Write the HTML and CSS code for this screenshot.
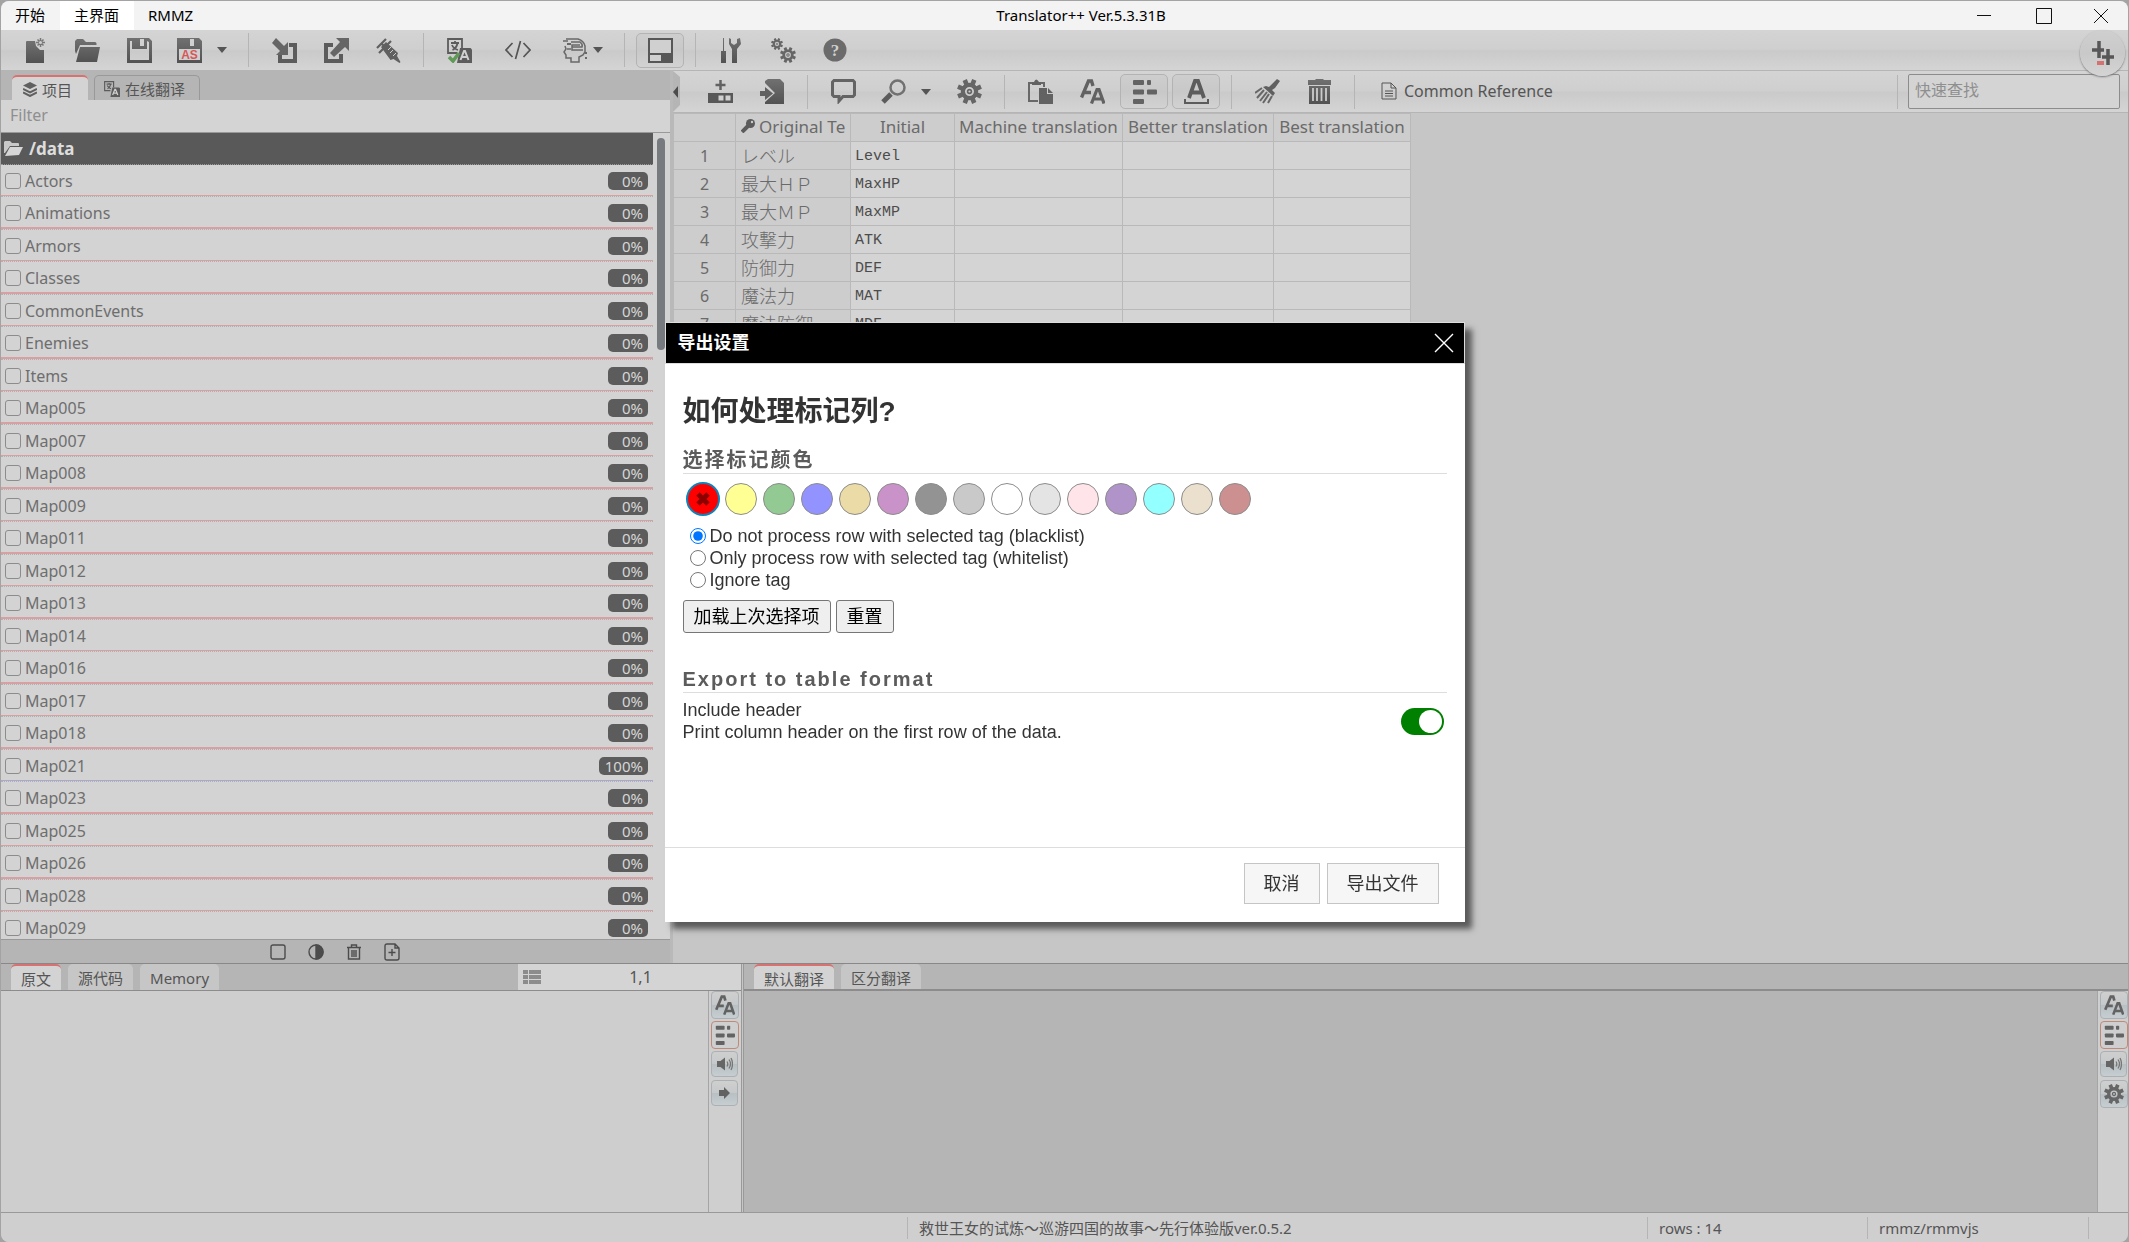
FILE: index.html
```html
<!DOCTYPE html>
<html lang="zh-CN">
<head>
<meta charset="utf-8">
<title>Translator++ Ver.5.3.31B</title>
<link rel="stylesheet" href="styles.css">
</head>
<body>
<svg class="sprite" aria-hidden="true">
  <defs>
    <linearGradient id="ink" x1="0" y1="0" x2="0" y2="1"><stop offset="0" stop-color="#717171"/><stop offset="1" stop-color="#525252"/></linearGradient>
  </defs>
  <symbol id="i-gear" viewBox="0 0 25 25">
    <g fill="none" stroke="#666"><circle cx="12.5" cy="12.5" r="6.6" stroke-width="4.2"/><circle cx="12.5" cy="12.5" r="1.9" stroke-width="1.6"/>
    <path stroke-width="4.6" d="M12.5 0v5M12.5 20v5M0 12.5h5M20 12.5h5M3.7 3.7l3.5 3.5M17.8 17.8l3.5 3.5M3.7 21.3l3.5-3.5M17.8 7.2l3.5-3.5" transform="rotate(22.5 12.5 12.5)"/></g>
  </symbol>
  <symbol id="i-aa" viewBox="0 0 25 25">
    <g fill="none" stroke="#626262"><path stroke-width="3.4" d="M1.5 18.5 8.5 2h3l1.500 5M5 13.500h6"/><path stroke-width="3.200" d="M11.500 24.500 17 10.500h2l5 14M13.500 20h9"/></g>
  </symbol>
  <symbol id="i-segments" viewBox="0 0 25 25">
    <g fill="#636363"><rect x="1" y="1" width="11" height="5" rx="1"/><rect x="15" y="1" width="4" height="5" rx="1"/><rect x="1" y="10.500" width="11" height="5" rx="1"/><rect x="15" y="10.500" width="10" height="5" rx="1"/><rect x="1" y="20" width="11" height="5" rx="1"/></g>
  </symbol>
  <symbol id="i-sound" viewBox="0 0 16 16">
    <path fill="#666" d="M0 5h3.500L8 1.500v13L3.500 11H0z"/><path fill="none" stroke="#777" stroke-width="1.300" d="M10 5.500q1.600 2.500 0 5M12 3.500q3 4.500 0 9M14 2q3 6 0 12"/>
  </symbol>
  <symbol id="i-translate" viewBox="0 0 25 25">
    <path fill="none" stroke="#5c5c5c" stroke-width="1.800" d="M10 15H1V1h14v9M4 5h8M8 3v2M5.500 12c3-1.500 4.500-4 5-7M5 7c1 2.500 3 4 6 5"/>
    <path fill="#5c5c5c" d="M13 10h10.500L25 11.500V25H10z"/><path fill="none" stroke="#d0d0d0" stroke-width="2" d="M13.500 22l3.500-9h1l3.500 9M15 19h5"/>
  </symbol>
  <symbol id="i-folder" viewBox="0 0 25 23">
    <path fill="url(#ink)" d="M0 2l2-2h6l3 3h9q1.500 0 1.500 1.500V6H5L1 15 0 12zM5 8h20l-3 15H1z"/>
  </symbol>
</svg>

<div class="window">
  <header class="titlebar">
    <nav class="titlebar-menu" aria-label="菜单">
      <button>开始</button><button class="is-active">主界面</button><button>RMMZ</button>
    </nav>
    <div class="titlebar-title">Translator++ Ver.5.3.31B</div>
    <div class="titlebar-controls">
      <button aria-label="最小化"><svg width="16" height="16"><path d="M1 7.500h14"/></svg></button>
      <button aria-label="最大化"><svg width="16" height="16"><path d="M.5 .5h15v15H.5z"/></svg></button>
      <button aria-label="关闭"><svg width="16" height="16"><path d="M1 1l14 14M15 1L1 15"/></svg></button>
    </div>
  </header>

  <div class="toolbar toolbar-main">
    <button class="tool" aria-label="新建"><svg width="25" height="25"><path fill="url(#ink)" d="M3 4q0-1 1-1h8l1 5 4 4h4v13H3z"/><path stroke="#777" stroke-width="1.500" fill="none" d="M17.500 0v9M13 4.500h9M14.500 1.500l6 6M20.500 1.500l-6 6"/><circle cx="17.500" cy="4.500" r="1.500" fill="#d0d0d0"/></svg></button>
    <button class="tool" aria-label="打开"><svg width="25" height="23"><use href="#i-folder"/></svg></button>
    <button class="tool" aria-label="保存"><svg width="25" height="25"><path fill="url(#ink)" fill-rule="evenodd" d="M0 0h22l3 3v22H0zM3 3v19h19V4l-2-1v8H5V3zM13 1v7h4V1z"/></svg></button>
    <button class="tool tool-split saveas" aria-label="另存为"><svg width="25" height="25"><path fill="url(#ink)" fill-rule="evenodd" d="M0 0h22l3 3v22H0zM3 12v10h19V12zM13 1v7h4V1z"/><path fill="#cfcfcf" d="M2 11h21v11H2z"/><text x="12.500" y="21" text-anchor="middle" class="as">AS</text></svg><i class="caret"></i></button>
    <span class="sep"></span>
    <button class="tool" aria-label="导入"><svg width="25" height="25"><path fill="none" stroke="#5c5c5c" stroke-width="4" d="M17 7h6v16H8v-6"/><path fill="#666" d="M4 0l8 8 4-4v13H4l4-4-8-8z"/></svg></button>
    <button class="tool" aria-label="导出"><svg width="25" height="25"><path fill="none" stroke="#5c5c5c" stroke-width="4" d="M9 7H2v16h15v-7"/><path fill="#666" d="M12 0h13v13l-4-4-11 10-4-4L16 4z"/></svg></button>
    <button class="tool" aria-label="注入"><svg width="25" height="25"><path fill="#606060" d="M5 9l5-5 12 11-1 3 3.500 6-1 1-6-4-3 1z"/><path fill="none" stroke="#606060" stroke-width="2.200" d="M1 10L10 1M3 15L15 3M5 5l4 4"/><path stroke="#ccc" d="M12 12l3-3M14 15l3-3M17 18l3-3"/></svg></button>
    <span class="sep"></span>
    <button class="tool" aria-label="翻译"><svg width="25" height="25"><use href="#i-translate"/><path fill="none" stroke="#619a58" stroke-width="3.500" d="M2 19l4 4 6-8"/></svg></button>
    <button class="tool tool-wide" aria-label="代码"><svg width="26" height="20"><path fill="none" stroke="#555" stroke-width="1.700" d="M7.500 3L1 10l6.500 7M18.500 3L25 10l-6.500 7M15.500 1l-5 18"/></svg></button>
    <button class="tool tool-split head" aria-label="自动化"><svg width="25" height="25"><path fill="none" stroke="#686868" stroke-width="1.500" d="M0 3h5M3 1h12q6 2 7 7v6l-2 3-4 2v5H8v-4H3v-3l-2-3 2-3-1-3M8 4h9q3 2 2 5H9V7h8M9 9v3h11M4 11h4"/><path fill="#686868" d="M22 14h2v2h-2zM22 19h2v2h-2zM4 5h4v2H4z"/></svg><i class="caret"></i></button>
    <span class="sep"></span>
    <button class="tool is-on" aria-label="面板"><svg width="25" height="25"><path fill="#575757" d="M0 0h25v25H0z"/><path fill="#d0d0d0" d="M2 2h21v13H2zM2 17h11v6H2z"/></svg></button>
    <span class="sep"></span>
    <button class="tool" aria-label="工具"><svg width="20" height="25"><path fill="url(#ink)" d="M2 0h1v13h2v12H0V13h2zM8 0l2 1v4l3 2 3-2V1l3-1 1 6-4 5v14h-5V11L8 6z"/></svg></button>
    <button class="tool" aria-label="设置"><svg width="25" height="25"><use href="#i-gear" width="12" height="12"/><use href="#i-gear" x="9" y="9" width="16" height="16"/></svg></button>
    <button class="tool" aria-label="帮助"><svg width="24" height="24"><circle cx="12" cy="12" r="11.500" fill="#6b6b6b"/><text x="12" y="18" text-anchor="middle" class="q">?</text></svg></button>
    <button class="brand" aria-label="Translator++"><svg width="22" height="24"><path stroke="#575757" stroke-width="3.500" fill="none" d="M7 0v17M0 9h12M16 8v16M10 16h12"/><path fill="#d47272" d="M5 20h7v4H5z"/></svg></button>
  </div>

  <div class="workspace">
    <aside class="project">
      <div class="project-tabs">
        <button class="ptab is-active"><svg width="14" height="15"><path fill="#606060" d="M7 0l7 3.500L7 7 0 3.500z"/><path fill="none" stroke="#606060" stroke-width="2" d="M0 7l7 3.500L14 7M0 10.500L7 14l7-3.500"/></svg>项目</button>
        <button class="ptab"><svg width="16" height="16"><use href="#i-translate"/></svg>在线翻译</button>
      </div>
      <input class="filter" type="text" placeholder="Filter" aria-label="Filter">
      <div class="files">
        <div class="files-scroll">
          <div class="folder"><svg width="19" height="15"><path fill="#c9c9c9" d="M0 1l1-1h5l2 2h6q1 0 1 1v2H6L1 12H0z"/><path fill="#d6d6d6" d="M6 6h13l-4 8-14 1z"/></svg>/data</div>
          <ul class="file-list">
            <li><label><input type="checkbox">Actors</label><span class="badge">0%</span></li>
            <li><label><input type="checkbox">Animations</label><span class="badge">0%</span></li>
            <li><label><input type="checkbox">Armors</label><span class="badge">0%</span></li>
            <li><label><input type="checkbox">Classes</label><span class="badge">0%</span></li>
            <li><label><input type="checkbox">CommonEvents</label><span class="badge">0%</span></li>
            <li><label><input type="checkbox">Enemies</label><span class="badge">0%</span></li>
            <li><label><input type="checkbox">Items</label><span class="badge">0%</span></li>
            <li><label><input type="checkbox">Map005</label><span class="badge">0%</span></li>
            <li><label><input type="checkbox">Map007</label><span class="badge">0%</span></li>
            <li><label><input type="checkbox">Map008</label><span class="badge">0%</span></li>
            <li><label><input type="checkbox">Map009</label><span class="badge">0%</span></li>
            <li><label><input type="checkbox">Map011</label><span class="badge">0%</span></li>
            <li><label><input type="checkbox">Map012</label><span class="badge">0%</span></li>
            <li><label><input type="checkbox">Map013</label><span class="badge">0%</span></li>
            <li><label><input type="checkbox">Map014</label><span class="badge">0%</span></li>
            <li><label><input type="checkbox">Map016</label><span class="badge">0%</span></li>
            <li><label><input type="checkbox">Map017</label><span class="badge">0%</span></li>
            <li><label><input type="checkbox">Map018</label><span class="badge">0%</span></li>
            <li class="is-done"><label><input type="checkbox">Map021</label><span class="badge">100%</span></li>
            <li><label><input type="checkbox">Map023</label><span class="badge">0%</span></li>
            <li><label><input type="checkbox">Map025</label><span class="badge">0%</span></li>
            <li><label><input type="checkbox">Map026</label><span class="badge">0%</span></li>
            <li><label><input type="checkbox">Map028</label><span class="badge">0%</span></li>
            <li><label><input type="checkbox">Map029</label><span class="badge">0%</span></li>
          </ul>
        </div>
        <div class="scroll-track"><div class="scroll-thumb"></div></div>
      </div>
      <div class="project-actions">
        <button aria-label="全选"><svg width="16" height="16"><rect x="1" y="1" width="14" height="14" rx="2"/></svg></button>
        <button aria-label="反选"><svg width="16" height="16"><circle cx="8" cy="8" r="7"/><path class="solid" d="M8 1a7 7 0 010 14z"/></svg></button>
        <button aria-label="删除"><svg width="16" height="16"><path d="M1 3.500h14M5.500 3V1h5v2M2.500 4v11h11V4M6 6v7M8 6v7M10 6v7"/></svg></button>
        <button aria-label="添加"><svg width="16" height="18"><path d="M1 3q0-2 2-2h8l4 4v10q0 2-2 2H3q-2 0-2-2zM11 1v4h4M8 6v7M4.500 9.500h7"/></svg></button>
      </div>
    </aside>

    <main class="sheet">
      <div class="toolbar toolbar-sheet">
        <button class="collapse" aria-label="收起"><i></i></button>
        <button class="tool" aria-label="添加列"><svg width="25" height="25"><path stroke="#626262" stroke-width="2.500" fill="none" d="M12.500 1v10M7.500 6h10"/><path fill="#585858" d="M0 14h25v10H0z"/><path fill="#d0d0d0" d="M10.500 16.500h5v5h-5zM17.500 16.500h5v5h-5z"/></svg></button>
        <button class="tool" aria-label="导入文件"><svg width="25" height="25"><path fill="url(#ink)" d="M5 2l3-2h12l4 4v21H5v-2l10-9L5 4z"/><path fill="#606060" d="M0 12h5V8l8 6.500L5 21v-4H0z"/></svg></button>
        <span class="sep"></span>
        <button class="tool" aria-label="备注"><svg width="25" height="25"><path fill="none" stroke="#646464" stroke-width="3" d="M3 1.500h19l1.500 1.500v13L22 17.500H12L8 22v-4.500H3L1.500 16V3z"/></svg></button>
        <button class="tool tool-split search" aria-label="查找"><svg width="25" height="25"><circle cx="16.500" cy="8.500" r="7" fill="none" stroke="#717171" stroke-width="2.500"/><path stroke="#5c5c5c" stroke-width="5" d="M2 23l8-8"/></svg><i class="caret"></i></button>
        <button class="tool" aria-label="选项"><svg width="25" height="25"><use href="#i-gear"/></svg></button>
        <span class="sep"></span>
        <button class="tool" aria-label="粘贴"><svg width="25" height="25"><path fill="none" stroke="#686868" stroke-width="2" d="M10 22H1V4h15v4"/><path fill="#626262" d="M4 6V3h2q2-5 5 0h2v3zM11 9h9l5 5v11H11z"/><path fill="#ccc" d="M19 9v6h6v-1h-5V9z"/></svg></button>
        <button class="tool" aria-label="字体"><svg width="25" height="25"><use href="#i-aa"/></svg></button>
        <button class="tool is-on" aria-label="换行"><svg width="25" height="25"><use href="#i-segments"/></svg></button>
        <button class="tool is-on" aria-label="文本"><svg width="25" height="25"><path fill="none" stroke="#5c5c5c" stroke-width="3.800" d="M5 19l6-17h3l6 17M8 13.500h9"/><path fill="none" stroke="#5c5c5c" stroke-width="2" d="M1 20v4h23v-4"/></svg></button>
        <span class="sep"></span>
        <button class="tool" aria-label="清除"><svg width="25" height="25"><path fill="#606060" d="M22 0l3 2-5 7-3 2 3 3-2 3-10-9 3-1 3 1 2-2z"/><path stroke="#676767" stroke-width="2" fill="none" d="M7 9l-7 5M9 11l-7 8M12 13l-7 9M14 15l-6 9M17 17l-4 7"/></svg></button>
        <button class="tool" aria-label="删除行"><svg width="25" height="25"><path fill="url(#ink)" d="M1 1h7l1-1h7l1 1h7v5H1zM2 7h21v18H2z"/><path stroke="#ccc" stroke-width="1.800" d="M6 9v13M10 9v13M14.500 9v13M19 9v13"/></svg></button>
        <span class="sep"></span>
        <button class="reference"><svg width="16" height="18"><path d="M1 1h9l5 5v11H1zM10 1v5h5M4 9h8M4 11.500h8M4 14h8"/></svg>Common Reference</button>
        <span class="sep push"></span>
        <input class="quick" type="text" placeholder="快速查找" aria-label="快速查找">
      </div>
      <div class="sheet-body">
        <table class="grid">
          <colgroup><col class="c-num"><col class="c-orig"><col class="c-init"><col class="c-mach"><col class="c-better"><col class="c-best"></colgroup>
          <thead><tr><th></th><th class="key"><svg width="14" height="14"><path fill="none" stroke="#5c5c5c" stroke-width="4" d="M1 13l6-6"/><circle cx="9.500" cy="4.500" r="4.500" fill="#5c5c5c"/><circle cx="11" cy="3" r="1.200" fill="#ccc"/></svg>Original Te</th><th>Initial</th><th>Machine translation</th><th>Better translation</th><th>Best translation</th></tr></thead>
          <tbody>
            <tr><th>1</th><td>レベル</td><td>Level</td><td></td><td></td><td></td></tr>
            <tr><th>2</th><td>最大ＨＰ</td><td>MaxHP</td><td></td><td></td><td></td></tr>
            <tr><th>3</th><td>最大ＭＰ</td><td>MaxMP</td><td></td><td></td><td></td></tr>
            <tr><th>4</th><td>攻撃力</td><td>ATK</td><td></td><td></td><td></td></tr>
            <tr><th>5</th><td>防御力</td><td>DEF</td><td></td><td></td><td></td></tr>
            <tr><th>6</th><td>魔法力</td><td>MAT</td><td></td><td></td><td></td></tr>
            <tr><th>7</th><td>魔法防御</td><td>MDF</td><td></td><td></td><td></td></tr>
          </tbody>
        </table>
      </div>
    </main>
  </div>

  <div class="editors">
    <section class="editor editor-source">
      <div class="editor-tabs">
        <button class="etab is-active">原文</button><button class="etab">源代码</button><button class="etab">Memory</button>
        <div class="position"><svg width="18" height="15"><path fill="#8c8c8c" d="M0 0h5v4H0zM6 0h12v4H6zM0 5h5v4H0zM6 5h12v4H6zM0 10h5v4H0zM6 10h12v4H6z"/></svg><span>1,1</span></div>
      </div>
      <div class="editor-body">
        <textarea aria-label="原文" readonly></textarea>
        <div class="side">
          <button aria-label="字体"><svg width="20" height="20"><use href="#i-aa"/></svg></button>
          <button class="is-on" aria-label="换行"><svg width="20" height="20"><use href="#i-segments"/></svg></button>
          <button class="low" aria-label="朗读"><svg width="16" height="16"><use href="#i-sound"/></svg></button>
          <button class="low" aria-label="下一个"><svg width="12" height="12"><path fill="#626262" d="M0 3h5V0l6 6-6 6V9H0z"/></svg></button>
        </div>
      </div>
    </section>
    <section class="editor editor-target">
      <div class="editor-tabs">
        <button class="etab is-active">默认翻译</button><button class="etab">区分翻译</button>
      </div>
      <div class="editor-body">
        <textarea aria-label="默认翻译"></textarea>
        <div class="side">
          <button aria-label="字体"><svg width="20" height="20"><use href="#i-aa"/></svg></button>
          <button class="is-on" aria-label="换行"><svg width="20" height="20"><use href="#i-segments"/></svg></button>
          <button class="low" aria-label="朗读"><svg width="16" height="16"><use href="#i-sound"/></svg></button>
          <button aria-label="设置"><svg width="20" height="20"><use href="#i-gear"/></svg></button>
        </div>
      </div>
    </section>
  </div>

  <footer class="status"><span></span><span>救世王女的试炼～巡游四国的故事～先行体验版ver.0.5.2</span><span>rows : 14</span><span>rmmz/rmmvjs</span><span></span></footer>
</div>

<div class="overlay">
  <section class="dialog" role="dialog" aria-labelledby="dialog-title">
    <header class="dialog-head"><span id="dialog-title">导出设置</span><button aria-label="关闭"><svg width="20" height="20"><path d="M1 1l18 18M19 1L1 19"/></svg></button></header>
    <form class="dialog-body">
      <h1>如何处理标记列?</h1>
      <h2>选择标记颜色</h2>
      <div class="swatches">
        <button type="button" class="swatch is-picked red" aria-label="红"><svg width="14" height="14"><path stroke="#8c0000" stroke-width="5" d="M2 2l10 10M12 2L2 12"/></svg></button>
        <button type="button" class="swatch yellow" aria-label="黄"></button>
        <button type="button" class="swatch green" aria-label="绿"></button>
        <button type="button" class="swatch blue" aria-label="蓝"></button>
        <button type="button" class="swatch gold" aria-label="金"></button>
        <button type="button" class="swatch violet" aria-label="紫"></button>
        <button type="button" class="swatch gray" aria-label="灰"></button>
        <button type="button" class="swatch silver" aria-label="银"></button>
        <button type="button" class="swatch white" aria-label="白"></button>
        <button type="button" class="swatch smoke" aria-label="浅灰"></button>
        <button type="button" class="swatch pink" aria-label="粉"></button>
        <button type="button" class="swatch purple" aria-label="深紫"></button>
        <button type="button" class="swatch aqua" aria-label="青"></button>
        <button type="button" class="swatch beige" aria-label="米"></button>
        <button type="button" class="swatch brown" aria-label="棕"></button>
      </div>
      <div class="choices">
        <label><input type="radio" name="mode" checked>Do not process row with selected tag (blacklist)</label>
        <label><input type="radio" name="mode">Only process row with selected tag (whitelist)</label>
        <label><input type="radio" name="mode">Ignore tag</label>
      </div>
      <div class="plain-buttons"><button type="button">加载上次选择项</button><button type="button">重置</button></div>
      <h2>Export to table format</h2>
      <div class="option">
        <label for="include-header">Include header<br>Print column header on the first row of the data.</label>
        <input class="toggle" id="include-header" type="checkbox" checked>
      </div>
    </form>
    <footer class="dialog-foot"><button>取消</button><button>导出文件</button></footer>
  </section>
</div>
</body>
</html>
```
FILE: styles.css
```css
* { box-sizing: border-box; }
:root {
  --ui: "Noto Sans", "Noto Sans CJK SC", sans-serif;
  --arial: "Liberation Sans", "Noto Sans CJK SC", sans-serif;
  --line: #b5b5b5;
  --bar: linear-gradient(#d4d4d4, #cfcfcf 48%, #cacaca 52%, #d4d4d4);
}
body { margin: 0; padding: 1px 1px 0; background: #a3a3a3; font: 16px/20px var(--ui); color: #555; }
button, input, textarea { font: inherit; color: inherit; margin: 0; border-radius: 0; }
button { border: 0; padding: 0; background: none; white-space: nowrap; }
svg { display: block; flex: none; }
.sprite { position: absolute; width: 0; height: 0; }

.window { display: grid; grid-template-rows: 29px 40px minmax(0, 894fr) minmax(0, 248fr) 30px; height: calc(100vh - 1px); overflow: hidden; border-radius: 8px; background: #c6c6c6; }

/* title bar */
.titlebar { display: flex; background: #f3f3f3; color: #000; font-size: 15px; }
.titlebar-menu { display: flex; }
.titlebar-menu button { padding: 0 15px 1px 14px; }
.titlebar-menu .is-active { background: #fff; }
.titlebar-title { flex: 1; text-align: center; line-height: 29px; }
.titlebar-controls { display: flex; }
.titlebar-controls button { display: grid; place-items: center; width: 60px; }
.titlebar-controls svg { fill: none; stroke: #111; }
.titlebar-controls button:last-child { width: 54px; }

/* toolbars */
.toolbar { display: flex; align-items: center; gap: 4px; background: var(--bar); }
.toolbar-main { padding: 0 3px 0 10px; }
.tool { display: flex; align-items: center; justify-content: center; width: 48px; height: 35px; border-radius: 5px; }
.tool.is-on { border: 1px solid #b3b3b3; background: linear-gradient(#cecece, #c8c8c8 50%, #d2d2d2); }
.tool-wide { width: 62px; }
.tool-split { width: auto; padding: 0 10px; }
.saveas { gap: 15px; }
.head { gap: 5px; }
.search { gap: 15px; }
.caret { border: 5px solid transparent; border-top: 6px solid #555; border-bottom: 0; }
.as { font: bold 12px "Liberation Sans", sans-serif; fill: #d65757; }
.q { font: bold 17px "Liberation Serif", serif; fill: #d0d0d0; }
.sep { width: 1px; height: 34px; margin: 0 7px; background: var(--line); }
.push { margin-left: auto; margin-right: 6px; }
.brand { z-index: 2; display: grid; place-items: center; align-self: flex-start; flex: none; width: 45px; height: 46px; margin: 0 0 -6px auto; border-radius: 50%; background: linear-gradient(#cfcfcf, #c9c9c9 50%, #d4d4d4); box-shadow: 0 1px 2px #777; }

.workspace { display: grid; grid-template-columns: minmax(0, 672fr) minmax(0, 1455fr); min-height: 0; border-bottom: 1px solid #888; }

/* project panel */
.project { display: flex; flex-direction: column; min-height: 0; border-right: 3px solid #b9b9b9; background: #d3d3d3; }
.project-tabs { display: flex; align-items: flex-end; gap: 6px; height: 30px; padding-left: 11px; background: #b5b5b5; }
.ptab { display: flex; align-items: center; gap: 5px; height: 25px; padding: 2px 14px 0 9px; border: 1px solid #999; border-bottom: 0; border-radius: 5px 5px 0 0; font-size: 15px; }
.ptab.is-active { border: 0; border-top: 2px solid #d87272; padding: 2px 16px 0 11px; background: #d4d4d4; }
.filter { height: 33px; padding: 0 9px 2px; border: 0; border-bottom: 1px solid #999; background: #d4d4d4; }
.filter::placeholder, .quick::placeholder { color: #8f8f8f; opacity: 1; }
.files { display: flex; flex: 1; min-height: 0; overflow: hidden; }
.files-scroll { flex: 1; }
.folder { display: flex; align-items: center; gap: 6px; height: 32px; padding-left: 3px; border-bottom: 1px dotted #999; background: #595959; color: #ddd; font-weight: bold; font-size: 17px; }
.file-list { margin: 0; padding: 0; list-style: none; }
.file-list li { display: flex; align-items: center; justify-content: space-between; height: 32px; padding-right: 5px; border-bottom: 1px dotted #b0b0b0; box-shadow: inset 0 -1px #d9a0a3; color: #6e6e6e; }
.file-list li:nth-child(even) { height: 33px; box-shadow: inset 0 -2px #d9a0a3; }
.file-list li.is-done { box-shadow: inset 0 -1px #a9a9cf; }
.file-list label { display: flex; align-items: center; gap: 4px; padding-left: 4px; }
.file-list input { appearance: none; width: 16px; height: 16px; border: 1px solid #8c8c8c; border-radius: 3px; }
.badge { min-width: 40px; padding: 0 5px 0 6px; border-radius: 5px; background: #5c5c5c; color: #d6d6d6; font-size: 15px; line-height: 18px; text-align: right; }
.scroll-track { width: 17px; padding: 5px 5px 0 4px; }
.scroll-thumb { height: 212px; border-radius: 4px; background: #777b80; }
.project-actions { display: flex; align-items: center; justify-content: center; gap: 22px; height: 24px; padding-right: 2px; border-top: 1px solid #999; background: #b5b5b5; }
.project-actions svg { fill: none; stroke: #4c4c4c; stroke-width: 1.4; }
.project-actions .solid { fill: #4c4c4c; }

/* sheet */
.sheet { display: flex; flex-direction: column; min-height: 0; overflow: hidden; }
.toolbar-sheet { height: 43px; padding-right: 8px; border-top: 1px solid var(--line); border-bottom: 1px solid var(--line); }
.collapse { display: flex; align-items: center; align-self: stretch; width: 7px; margin-right: 12px; background: #b5b5b5; clip-path: polygon(0 0, 100% 6px, 100% 34px, 0 100%); }
.collapse i { border: 6px solid transparent; border-right: 5px solid #4c4c4c; border-left: 0; }
.reference { display: flex; align-items: center; gap: 7px; margin-left: 15px; padding-bottom: 2px; }
.reference svg { fill: none; stroke: #555; }
.quick { width: 212px; height: 35px; padding: 0 6px 3px; border: 1px solid #8c8c8c; border-radius: 2px; background: #d4d4d4; }
.sheet-body { flex: 1; min-height: 0; overflow: hidden; }
.grid { width: 737px; table-layout: fixed; border-collapse: collapse; }
.c-num { width: 62px; } .c-orig { width: 115px; } .c-init { width: 104px; } .c-mach { width: 168px; } .c-better { width: 151px; } .c-best { width: 137px; }
.grid tr { height: 28px; }
.grid th, .grid td { height: 28px; padding: 0 4px; border: 1px solid #b9b9b9; overflow: hidden; white-space: nowrap; font-weight: normal; line-height: 20px; }
.grid th { background: #cdcdcd; color: #6a6a6a; text-align: center; }
.grid thead th { padding: 0 3px 2px; font-size: 17px; }
.grid thead .key { padding-left: 5px; padding-right: 0; text-align: left; }
.key svg { display: inline-block; margin-right: 4px; }
.grid td { padding-top: 2px; background: #d4d4d4; color: #4c4c4c; font: 15px/20px "Liberation Mono", monospace; }
.grid td:nth-child(2) { padding: 0 4px 2px 5px; background: #cdcdcd; color: #6a6a6a; font: 18px/20px "Noto Sans CJK JP", sans-serif; font-weight: 300; }

/* editors */
.editors { display: grid; grid-template-columns: minmax(0, 743fr) minmax(0, 1384fr); min-height: 0; }
.editor { display: flex; flex-direction: column; min-width: 0; }
.editor-source { border-right: 3px double #999; }
.editor-tabs { display: flex; gap: 7px; height: 27px; padding-left: 10px; border-bottom: 1px solid #8c8c8c; background: #b5b5b5; }
.etab { padding: 2px 10px 0; border-radius: 5px 5px 0 0; background: #c6c6c6; font-size: 15px; }
.etab.is-active { border-top: 2px solid #d87272; background: #d3d3d3; }
.position { display: flex; align-items: center; width: 223px; margin-left: auto; padding-left: 5px; background: #d4d4d4; }
.position span { flex: 1; padding-right: 1px; text-align: center; }
.editor-body { display: flex; flex: 1; min-height: 0; }
.editor-body textarea { flex: 1; min-width: 0; border: 0; background: #cecece; resize: none; outline: 0; }
.editor-target textarea { background: #b5b5b5; }
.editor-target .editor-tabs { border-bottom-width: 2px; }
.side { display: flex; flex-direction: column; gap: 2px; width: 33px; padding-left: 2px; border-left: 1px solid #a5a5a5; background: #cfcfcf; }
.editor-target .side { width: 31px; }
.side button { display: grid; place-items: center; width: 28px; height: 28px; border: 1px solid #aab0b3; border-radius: 4px; background: linear-gradient(#cfcfcf, #c6c9ca 48%, #b8c0c4 52%, #c6ced1); }
.side .low { width: 27px; height: 26px; margin-bottom: 1px; }
.side .is-on { border-color: #c08a78; background: #cfcfcf; }

/* status bar */
.status { display: grid; grid-template-columns: 906fr 740fr 220fr 221fr 40fr; align-items: center; border-top: 1px solid #999; background: #cfcfcf; font-size: 15px; }
.status span { height: 22px; padding-left: 11px; border-left: 1px solid var(--line); line-height: 22px; white-space: nowrap; }
.status span:first-child { border: 0; }

/* export dialog */
.overlay { position: fixed; inset: 0; display: grid; place-items: center; padding-top: 2px; }
.dialog { display: flex; flex-direction: column; width: 800px; background: #fff; color: #333; font: 18px/22px var(--arial); box-shadow: 7px 7px 6px #5a5a5a; }
.dialog-head { display: flex; align-items: center; justify-content: space-between; height: 42px; padding: 0 10px 0 12px; border: 1px solid #ddd; background: #000; color: #fff; font-weight: bold; }
.dialog-head svg { fill: none; stroke: #fff; stroke-width: 1.400; }
.dialog-body { padding: 30px 18px 0; }
.dialog-body h1 { margin: 0 0 16px; font-size: 28px; line-height: 36px; }
.dialog-body h2 { margin: 0; padding-top: 2px; border-bottom: 1px solid #ddd; color: #5c5c5c; font-size: 20px; line-height: 25px; letter-spacing: 2px; }
.swatches { display: flex; align-items: center; gap: 6px; height: 49px; padding-left: 3px; }
.swatch { display: grid; place-items: center; width: 32px; height: 32px; border: 1px solid #8c8c8c; border-radius: 50%; }
.swatch.is-picked { width: 34px; height: 34px; margin-right: -1px; border: 2px solid #1182b8; }
.red { background: #f00; } .yellow { background: #ffff93; } .green { background: #93c993; } .blue { background: #9393ff; } .gold { background: #ebdba6; }
.violet { background: #c993c9; } .gray { background: #939393; } .silver { background: #c9c9c9; } .white { background: #fff; } .smoke { background: #e4e4e4; }
.pink { background: #ffe4e9; } .purple { background: #b093c9; } .aqua { background: #93ffff; } .beige { background: #ebdfcd; } .brown { background: #cd9090; }
.choices label { display: flex; align-items: center; gap: 4px; height: 22px; padding-left: 7px; }
.choices { padding-top: 2px; }
.choices input { width: 16px; height: 16px; }
.plain-buttons { display: flex; gap: 5px; padding: 9px 0 32px; }
.plain-buttons button { height: 33px; padding: 0 10px; border: 1px solid #767676; border-radius: 3px; background: #efefef; color: #000; }
.option { display: flex; align-items: center; justify-content: space-between; height: 154px; padding: 6px 3px 104px 0; }
.toggle { appearance: none; display: flex; width: 43px; height: 27px; padding: 2px; border-radius: 14px; background: green; justify-content: flex-end; }
.toggle::after { content: ""; width: 23px; height: 23px; border-radius: 50%; background: #fff; }
.dialog-foot { display: flex; justify-content: flex-end; gap: 7px; padding: 15px 26px 18px; border-top: 1px solid #ddd; }
.dialog-foot button { height: 41px; padding: 0 19px; border: 1px solid #c5c5c5; background: #f6f6f6; }
```
